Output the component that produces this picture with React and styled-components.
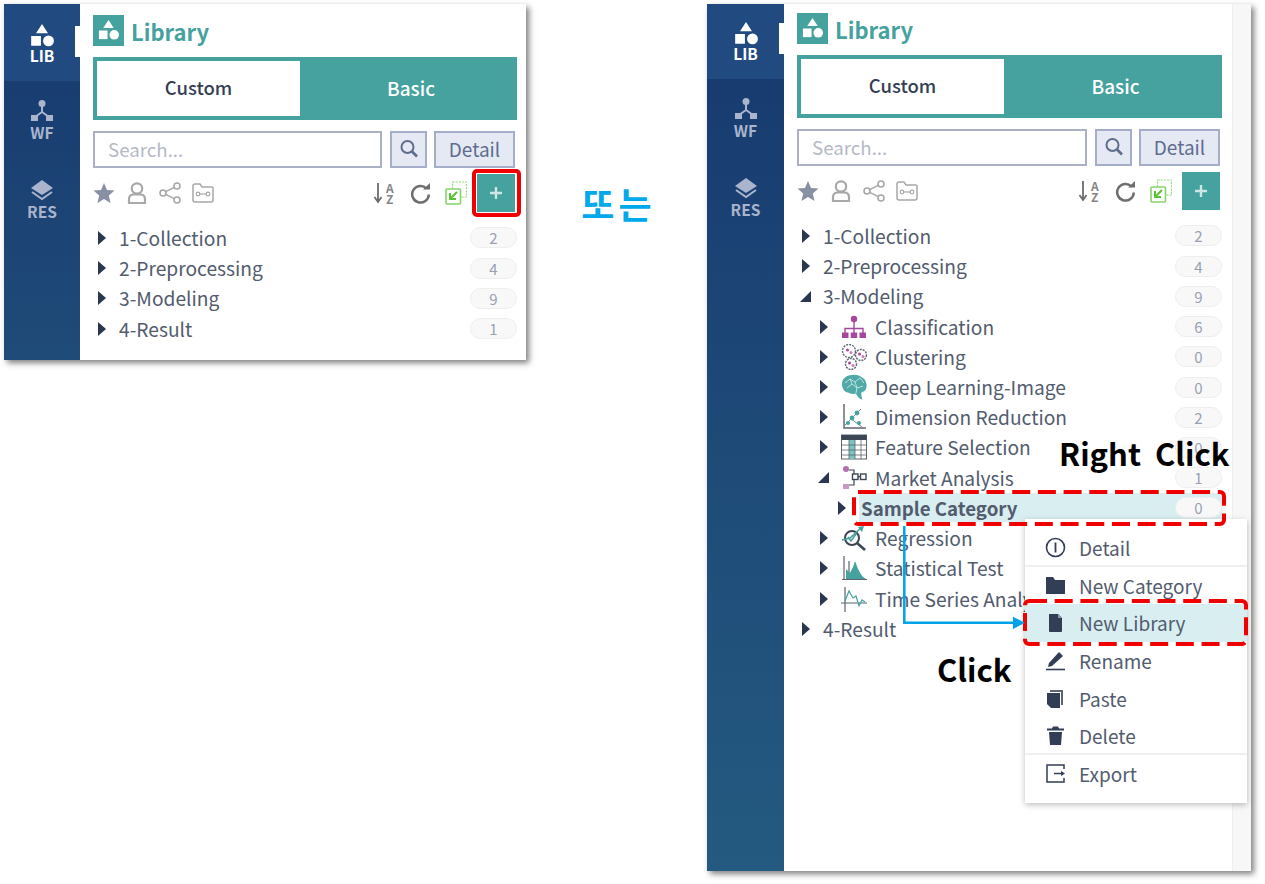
import React from 'react';
import styled, {createGlobalStyle} from 'styled-components';

const FONT = '"Noto Sans CJK KR", "Noto Sans", sans-serif';
const TEAL = '#45a29f';
const INK = '#525c6e';
const NAVY = '#2b3750';

const GlobalStyle = createGlobalStyle`
    * { box-sizing: border-box; }
    html, body { margin: 0; background: #fff; }
    body { font-family: ${FONT}; }
`;

const Page = styled.div`
    width: 1265px;
    height: 884px;
    padding: 4px;
    display: flex;
    align-items: flex-start;
    background: #fff;
    overflow: hidden;
`;

const Window = styled.div`
    position: relative;
    flex: none;
    display: flex;
    width: ${p => p.$width}px;
    height: ${p => p.$height}px;
    background: #fff;
    box-shadow: 3px 3px 6px rgba(0, 0, 0, .5);
`;

const Middle = styled.div`
    flex: none;
    width: 181px;
    padding-top: 177px;
    text-align: center;
    color: #00a8ec;
    font-size: 36px;
    font-weight: 700;
    line-height: 44px;
    word-spacing: -4px;
`;

const Sidebar = styled.div`
    position: relative;
    flex: none;
    width: ${p => p.$width}px;
    background: linear-gradient(#17396f, ${p => p.$end});
`;

const SideTab = styled.div`
    height: ${p => p.$height}px;
    padding-top: ${p => p.$pad}px;
    display: flex;
    flex-direction: column;
    align-items: center;
    font-size: 15.5px;
    line-height: 17px;
    font-weight: 700;
    color: ${p => p.$active ? '#fff' : '#aab4cc'};
    background: ${p => p.$active ? '#214a80' : 'transparent'};
`;

const SideCaption = styled.div`
    margin-top: ${p => p.$gap}px;
`;

const SideMark = styled.div`
    position: absolute;
    right: 0;
    top: ${p => p.$top}px;
    width: 5px;
    height: 31px;
    background: #fff;
`;

const Content = styled.div`
    flex: 1;
    min-width: 0;
    padding: ${p => p.$top}px ${p => p.$right}px 0 13px;
`;

const Scroller = styled.div`
    flex: none;
    width: 19px;
    background: #f7f7f7;
    border-left: 1px solid #eee;
`;

const TitleRow = styled.div`
    display: flex;
    align-items: center;
    gap: 7px;
    height: 31px;
    color: ${TEAL};
    font-size: 22px;
    font-weight: 700;
`;

const TitleIcon = styled.div`
    width: 31px;
    height: 31px;
    background: ${TEAL};
    display: flex;
    align-items: center;
    justify-content: center;
`;

const Tabs = styled.div`
    display: flex;
    height: 63px;
    margin-top: 11px;
    border: 4px solid ${TEAL};
    background: ${TEAL};
`;

const CustomTab = styled.div`
    flex: none;
    width: 203px;
    padding-bottom: 3px;
    display: flex;
    align-items: center;
    justify-content: center;
    font-size: 18.5px;
    font-weight: 500;
    background: #fff;
    color: #333e55;
`;

const BasicTab = styled.div`
    flex: 1;
    padding: 0 0 3px 9px;
    display: flex;
    align-items: center;
    justify-content: center;
    font-size: 19px;
    font-weight: 500;
    color: #fff;
`;

const SearchRow = styled.div`
    display: flex;
    height: 37px;
    margin-top: 11px;
    padding-right: 2px;
`;

const SearchBox = styled.div`
    flex: 1;
    display: flex;
    align-items: center;
    padding: 0 0 2px 13px;
    border: 2px solid #abb1c4;
    color: #b4b9c6;
    font-size: 18.7px;
`;

const SquareButton = styled.div`
    flex: none;
    width: ${p => p.$width}px;
    margin-left: ${p => p.$gap}px;
    padding-bottom: 2px;
    display: flex;
    align-items: center;
    justify-content: center;
    border: 2px solid #a4aec9;
    background: #e5e9f4;
    color: #5e6d8e;
    font-size: 19px;
`;

const Toolbar = styled.div`
    display: flex;
    justify-content: space-between;
    align-items: center;
    height: 38px;
    margin-top: 6px;
    padding-right: 2px;
`;

const ToolGroup = styled.div`
    display: flex;
    align-items: center;
    gap: ${p => p.$gap}px;
`;

const AddButton = styled.div`
    width: 38px;
    height: 38px;
    margin-left: -4px;
    display: flex;
    align-items: center;
    justify-content: center;
    background: ${TEAL};
`;

const SortBox = styled.div`
    width: 22px;
    height: 22px;
    display: flex;
    gap: 3px;
`;

const SortLetters = styled.div`
    display: flex;
    flex-direction: column;
    color: #858585;
    font-size: 12px;
    font-weight: 700;
    line-height: 11px;
`;

const Tree = styled.div`
    margin-top: 10.8px;
`;

const Row = styled.div`
    display: flex;
    align-items: center;
    height: 30.23px;
    padding-left: ${p => 5 + p.$level * 18}px;
    color: ${INK};
    font-size: 19.2px;
`;

const CaretSlot = styled.div`
    flex: none;
    width: 21px;
    display: flex;
    align-items: center;
`;

const CaretRight = styled.div`
    width: 0;
    height: 0;
    border-left: 8px solid ${NAVY};
    border-top: 7.5px solid transparent;
    border-bottom: 7.5px solid transparent;
`;

const CaretDown = styled.div`
    width: 0;
    height: 0;
    margin-left: -2px;
    border-right: 11px solid ${NAVY};
    border-top: 11px solid transparent;
`;

const RowIcon = styled.div`
    flex: none;
    width: 26px;
    height: 26px;
    margin-right: 8px;
`;

const Label = styled.div`
    flex: 1;
    min-width: 0;
    height: 29px;
    padding-left: ${p => p.$selected ? 2 : 0}px;
    display: flex;
    align-items: center;
    justify-content: space-between;
    white-space: nowrap;
    font-size: ${p => p.$selected ? 18.7 : 19.2}px;
    font-weight: ${p => p.$selected ? 700 : 400};
    background: ${p => p.$selected ? '#d8eef1' : 'transparent'};
`;

const Badge = styled.div`
    flex: none;
    width: 47px;
    height: 21px;
    display: flex;
    align-items: center;
    justify-content: center;
    border: 1px solid #eee;
    border-radius: 11px;
    background: #f8f8f8;
    color: #98a1b3;
    font-size: 15px;
    font-weight: 400;
`;

const Menu = styled.div`
    position: absolute;
    left: 318px;
    top: 515px;
    width: 222px;
    height: 284px;
    padding-top: 10px;
    background: #fff;
    box-shadow: 0 2px 6px rgba(0, 0, 0, .25);
`;

const MenuItem = styled.div`
    display: flex;
    align-items: center;
    gap: 13px;
    height: 37.6px;
    padding-left: 20px;
    color: ${INK};
    font-size: 19px;
    background: ${p => p.$active ? '#d8eef1' : 'transparent'};
    box-shadow: ${p => p.$divider ? '0 -2px 0 #f0f0f0' : 'none'};
`;

const RedFrame = styled.div`
    position: absolute;
    left: 468px;
    top: 165px;
    width: 49px;
    height: 48px;
    border: 4px solid #f00000;
    border-radius: 5px;
`;

const Callout = styled.div`
    position: absolute;
    left: ${p => p.$left}px;
    top: ${p => p.$top}px;
    color: #000;
    font-size: 31px;
    font-weight: 700;
    line-height: 40px;
    word-spacing: 7px;
    white-space: nowrap;
`;

const Overlay = styled.svg`
    position: absolute;
    left: 0;
    top: 0;
    pointer-events: none;
`;

const Svg = ({size = 22, h, vb, children}) =>
    <svg width={size} height={h || size} viewBox={vb || `0 0 ${size} ${h || size}`} style={{display: 'block'}}>
        {children}
    </svg>;

const ShapesIcon = ({size, color}) =>
    <Svg size={size} vb="0 0 24 24">
        <path d="M12 1 L17.5 9.5 H6.5 Z" fill={color}/>
        <rect x="2" y="12" width="9" height="9" fill={color}/>
        <circle cx="18" cy="16.5" r="5" fill={color}/>
    </Svg>;

const FlowIcon = () =>
    <Svg size={24} vb="0 0 24 24">
        <circle cx="12" cy="4.5" r="3.5" fill="#aab4cc"/>
        <path d="M12 7 V13 M12 13 L5 18 M12 13 L19 18" stroke="#aab4cc" strokeWidth="2" fill="none"/>
        <rect x="1" y="16" width="7" height="6" fill="#aab4cc"/>
        <rect x="16" y="16" width="7" height="6" fill="#aab4cc"/>
    </Svg>;

const LayersIcon = () =>
    <Svg size={24} vb="0 0 24 24">
        <path d="M12 2 L23 10 L12 17 L1 10 Z" fill="#aab4cc"/>
        <path d="M2 14 L12 21 L22 14" stroke="#aab4cc" strokeWidth="2" fill="none"/>
    </Svg>;

const MagnifierIcon = () =>
    <Svg size={20} vb="0 0 20 20">
        <circle cx="8.5" cy="8" r="6" stroke="#5e6d8e" strokeWidth="2" fill="none"/>
        <path d="M13 12.5 L18 17.5" stroke="#5e6d8e" strokeWidth="2.6"/>
    </Svg>;

const StarIcon = () =>
    <Svg vb="0 0 22 22">
        <path d="M11 1 L14 8 L21.5 8.6 L15.8 13.5 L17.6 21 L11 17 L4.4 21 L6.2 13.5 L.5 8.6 L8 8 Z" fill="#8790a5"/>
    </Svg>;

const UserIcon = () =>
    <Svg vb="0 0 22 22">
        <circle cx="11" cy="6.5" r="5.2" fill="none" stroke="#a8a8a8" strokeWidth="2.2"/>
        <path d="M3 21 V17 C3 14 5 12.5 8 12.5 H14 C17 12.5 19 14 19 17 V21 Z" fill="none" stroke="#a8a8a8" strokeWidth="2.2"/>
    </Svg>;

const ShareIcon = () =>
    <Svg vb="0 0 22 22">
        <circle cx="4" cy="11" r="3" fill="none" stroke="#a8a8a8" strokeWidth="1.6"/>
        <circle cx="18" cy="4" r="3" fill="none" stroke="#a8a8a8" strokeWidth="1.6"/>
        <circle cx="18" cy="18" r="3" fill="none" stroke="#a8a8a8" strokeWidth="1.6"/>
        <path d="M6.7 9.6 L15.3 5.4 M6.7 12.4 L15.3 16.6" stroke="#a8a8a8" strokeWidth="1.6"/>
    </Svg>;

const KeyFolderIcon = () =>
    <Svg vb="0 0 22 22">
        <path d="M1 4 Q1 2 3 2 H8 L10 5 H20 Q21 5 21 6 V18 Q21 20 19 20 H3 Q1 20 1 18 Z" fill="none" stroke="#a8a8a8" strokeWidth="1.5"/>
        <circle cx="6" cy="12" r="1.8" fill="none" stroke="#a8a8a8" strokeWidth="1.2"/>
        <circle cx="16" cy="12" r="1.8" fill="none" stroke="#a8a8a8" strokeWidth="1.2"/>
        <path d="M8 12 H14" stroke="#a8a8a8" strokeWidth="1.2"/>
    </Svg>;

const SortIcon = () =>
    <SortBox>
        <Svg size={10} h={22} vb="0 0 10 22">
            <path d="M5 1 V19 M1.5 15 L5 20 L8.5 15" fill="none" stroke="#6c6c6c" strokeWidth="1.8"/>
        </Svg>
        <SortLetters><span>A</span><span>Z</span></SortLetters>
    </SortBox>;

const RefreshIcon = () =>
    <Svg vb="0 0 22 22">
        <path d="M17.5 6.5 A8.3 8.3 0 1 0 19.8 12.5" fill="none" stroke="#6e6e6e" strokeWidth="2.5"/>
        <path d="M14 7.5 H21 V1 Z" fill="#6e6e6e"/>
    </Svg>;

const ImportIcon = () =>
    <Svg h={24} vb="0 0 22 24">
        <rect x="7.5" y="1" width="14" height="15" fill="none" stroke="#8fdc77" strokeWidth="1.2" strokeDasharray="2 1.2"/>
        <rect x="1" y="8" width="14.5" height="15" rx="1" fill="#fff" stroke="#86d36b" strokeWidth="1.6"/>
        <path d="M12 11 L6 17 M5 12 V18 H11" fill="none" stroke="#5cc236" strokeWidth="2"/>
    </Svg>;

const PlusIcon = () =>
    <Svg size={14} vb="0 0 14 14">
        <path d="M7 1 V13 M1 7 H13" stroke="#cfe6e4" strokeWidth="2.4"/>
    </Svg>;

const PURPLE = '#a5479c';
const GRAY = '#5d6470';

const OrgIcon = () =>
    <Svg size={26} vb="0 0 26 26">
        <circle cx="13" cy="5" r="3.2" fill={PURPLE}/>
        <path d="M13 8 V15 M4 19 V14.5 H22 V19 M13 14.5 V19" fill="none" stroke={PURPLE} strokeWidth="1.4"/>
        <rect x="1" y="18.5" width="6.5" height="5.5" fill={PURPLE}/>
        <rect x="9.7" y="18.5" width="6.5" height="5.5" fill={PURPLE}/>
        <rect x="18.5" y="18.5" width="6.5" height="5.5" fill={PURPLE}/>
    </Svg>;

const ClusterIcon = () =>
    <Svg size={26} vb="0 0 26 26">
        {[[8, 7, 6.5], [20, 11, 5.5], [10, 20, 5.5]].map(([cx, cy, r]) =>
            <g key={cx}>
                <circle {...{cx, cy, r}} fill="#fff" stroke="#5d6470" strokeWidth="1.4" strokeDasharray="2 1"/>
                <circle cx={cx - 1.5} cy={cy - 1} r="1.5" fill={PURPLE}/>
                <circle cx={cx + 2} cy={cy + 1.5} r="1.5" fill="#c77dc0"/>
            </g>)}
    </Svg>;

const BrainIcon = () =>
    <Svg size={26} vb="0 0 26 26">
        <path d="M1 10 C1 5 5 1 11 1 C13 0 19 1 22 4 C25 6 26 10 25.5 13 C25 17 22 18 20.5 18 C20 20 20.5 23 21.5 25.5 C18 25 16 22 15 19.5 C12 20.5 9 19.5 7 18.5 C3 18 1 14 1 10 Z" fill="#4fa9a6"/>
        <path d="M4 9 L9 5 L14 8 L19 4 L23 9 M6 14 L11 10 L16 14 L22 12 M9 5 L11 10 M14 8 L16 14 M16 14 L15 19" fill="none" stroke="#c9e8e6" strokeWidth=".9"/>
    </Svg>;

const ScatterIcon = () =>
    <Svg size={26} vb="0 0 26 26">
        <path d="M3 0 V24 H25" fill="none" stroke={GRAY} strokeWidth="1.4"/>
        <path d="M3 22 L20 5 M9 14 L21 23" stroke="#7a8088" strokeWidth="1"/>
        <circle cx="16" cy="9" r="2.4" fill="#45a29f"/>
        <circle cx="11" cy="14" r="2.4" fill="#45a29f"/>
        <circle cx="7" cy="19" r="2" fill="#45a29f"/>
        <circle cx="18" cy="19" r="2" fill="#45a29f"/>
    </Svg>;

const TableIcon = () =>
    <Svg size={26} vb="0 0 26 26">
        <rect x=".5" y="1" width="25" height="24" fill="#fff" stroke={GRAY} strokeWidth="1"/>
        <rect x=".5" y="1" width="25" height="5" fill="#3d4654"/>
        <rect x="8" y="6" width="6" height="19" fill="#7cc4c0"/>
        <path d="M8 6 V25 M14 6 V25 M20 6 V25 M1 11 H25 M1 16 H25 M1 21 H25" stroke={GRAY} strokeWidth=".8"/>
    </Svg>;

const NodesIcon = () =>
    <Svg size={26} vb="0 0 26 26">
        <circle cx="5" cy="4" r="3" fill="#b56fb0"/>
        <rect x="2" y="19" width="6" height="5" fill="#c79ac4"/>
        <rect x="11.5" y="9" width="5.5" height="5.5" fill="#fff" stroke="#3d4654" strokeWidth="1.4"/>
        <rect x="19.5" y="9" width="5.5" height="5.5" fill="#fff" stroke="#3d4654" strokeWidth="1.4"/>
        <path d="M8 5 H13 V9 M13 14.5 V20 H8 M17 11.7 H19.5" fill="none" stroke="#3d4654" strokeWidth="1.2"/>
    </Svg>;

const RegressionIcon = () =>
    <Svg size={26} vb="0 0 26 26">
        <circle cx="11" cy="13" r="7" fill="none" stroke="#3d4654" strokeWidth="2"/>
        <path d="M16 18 L24 25" stroke="#3d4654" strokeWidth="2.6"/>
        <path d="M1 15 L9 13 L20 3" fill="none" stroke="#45a29f" strokeWidth="1.6"/>
        <path d="M17 2 L23 1 L21 7 Z" fill="#45a29f"/>
        <path d="M7 12 L10 16 L15 9" fill="none" stroke="#45a29f" strokeWidth="1.6"/>
    </Svg>;

const HistogramIcon = () =>
    <Svg size={26} vb="0 0 26 26">
        <path d="M3 1 V25 M8 6 V25 M1 24.5 H26" stroke={GRAY} strokeWidth="1.2"/>
        <path d="M5 24 V14 L9 18 L12 12 L14 6 L17 14 L21 21 L25 24 Z" fill="#45a29f"/>
    </Svg>;

const WaveIcon = () =>
    <Svg size={26} vb="0 0 26 26">
        <path d="M4 1 V26 M0 17 H26" stroke={GRAY} strokeWidth="1.2"/>
        <path d="M4 15 L8 5 L12 12 L15 10 L18 20 L21 14 L24 16" fill="none" stroke="#45a29f" strokeWidth="1.2"/>
    </Svg>;

const DARK = '#323e55';

const InfoIcon = () =>
    <Svg size={21} vb="0 0 21 21">
        <circle cx="10.5" cy="10.5" r="9" fill="none" stroke={DARK} strokeWidth="1.6"/>
        <path d="M10.5 5.5 V15.5" stroke={DARK} strokeWidth="1.8"/>
    </Svg>;

const FolderIcon = () =>
    <Svg size={21} vb="0 0 21 21">
        <path d="M1 2 H8 L10 5 H20 V19 H1 Z" fill={DARK}/>
    </Svg>;

const FileIcon = () =>
    <Svg size={21} vb="0 0 21 21">
        <path d="M4 2 H13 L17 6 V19 Q17 20 16 20 H5 Q4 20 4 19 Z" fill={DARK}/>
        <path d="M13 2 L17 6 H13 Z" fill="#8d96a6"/>
    </Svg>;

const PenIcon = () =>
    <Svg size={21} vb="0 0 21 21">
        <path d="M4 13 L14 2 L18 6 L7 16 L3 17 Z" fill={DARK}/>
        <path d="M1 19.5 H20" stroke={DARK} strokeWidth="1.6"/>
    </Svg>;

const PasteIcon = () =>
    <Svg size={21} vb="0 0 21 21">
        <path d="M5 2 H18 V17 H16 V4 H5 Z" fill="#5b6577"/>
        <path d="M2 5 H15 V20 H6 L2 16 Z" fill={DARK}/>
    </Svg>;

const TrashIcon = () =>
    <Svg size={21} vb="0 0 21 21">
        <path d="M2 3.5 H7 L8 1.5 H13 L14 3.5 H19 V5.5 H2 Z" fill={DARK}/>
        <path d="M4 7 H17 L16 20 H5 Z" fill={DARK}/>
    </Svg>;

const ExportIcon = () =>
    <Svg size={21} vb="0 0 21 21">
        <path d="M19 6 V2 H2 V19 H19 V15" fill="none" stroke={DARK} strokeWidth="1.5"/>
        <path d="M9 10.5 H18" stroke={DARK} strokeWidth="1.5"/>
        <path d="M16 8 L20 10.5 L16 13 Z" fill={DARK}/>
    </Svg>;

const Panel = ({top, right, rows}) =>
    <Content $top={top} $right={right}>
        <TitleRow>
            <TitleIcon><ShapesIcon size={23} color="#fff"/></TitleIcon>
            Library
        </TitleRow>
        <Tabs>
            <CustomTab>Custom</CustomTab>
            <BasicTab>Basic</BasicTab>
        </Tabs>
        <SearchRow>
            <SearchBox>Search...</SearchBox>
            <SquareButton $width={37} $gap={8}><MagnifierIcon/></SquareButton>
            <SquareButton $width={81} $gap={7}>Detail</SquareButton>
        </SearchRow>
        <Toolbar>
            <ToolGroup $gap={11}>
                <StarIcon/><UserIcon/><ShareIcon/><KeyFolderIcon/>
            </ToolGroup>
            <ToolGroup $gap={14}>
                <SortIcon/><RefreshIcon/><ImportIcon/>
                <AddButton><PlusIcon/></AddButton>
            </ToolGroup>
        </Toolbar>
        <Tree>
            {rows.map(({name, count, level = 0, open, Icon, selected}) =>
                <Row key={name} $level={level}>
                    <CaretSlot>{open ? <CaretDown/> : <CaretRight/>}</CaretSlot>
                    {Icon && <RowIcon><Icon/></RowIcon>}
                    <Label $selected={selected}>
                        {name}
                        {count !== undefined && <Badge>{count}</Badge>}
                    </Label>
                </Row>)}
        </Tree>
    </Content>;

const Nav = ({lead, markTop}) =>
    <>
        <SideTab $active $height={lead} $pad={lead - 58}>
            <ShapesIcon size={26} color="#fff"/>
            <SideCaption $gap={-2}>LIB</SideCaption>
        </SideTab>
        <SideMark $top={markTop}/>
        <SideTab $height={79} $pad={18}>
            <FlowIcon/>
            <SideCaption $gap={1}>WF</SideCaption>
        </SideTab>
        <SideTab $height={79} $pad={18}>
            <LayersIcon/>
            <SideCaption $gap={1}>RES</SideCaption>
        </SideTab>
    </>;

const closedRows = [
    {name: '1-Collection', count: 2},
    {name: '2-Preprocessing', count: 4},
    {name: '3-Modeling', count: 9},
    {name: '4-Result', count: 1}
];

// the context menu covers the counts of the last three modeling rows
const openRows = [
    {name: '1-Collection', count: 2},
    {name: '2-Preprocessing', count: 4},
    {name: '3-Modeling', count: 9, open: true},
    {name: 'Classification', count: 6, level: 1, Icon: OrgIcon},
    {name: 'Clustering', count: 0, level: 1, Icon: ClusterIcon},
    {name: 'Deep Learning-Image', count: 0, level: 1, Icon: BrainIcon},
    {name: 'Dimension Reduction', count: 2, level: 1, Icon: ScatterIcon},
    {name: 'Feature Selection', count: 0, level: 1, Icon: TableIcon},
    {name: 'Market Analysis', count: 1, level: 1, open: true, Icon: NodesIcon},
    {name: 'Sample Category', count: 0, level: 2, selected: true},
    {name: 'Regression', level: 1, Icon: RegressionIcon},
    {name: 'Statistical Test', level: 1, Icon: HistogramIcon},
    {name: 'Time Series Analysis', level: 1, Icon: WaveIcon},
    {name: '4-Result'}
];

const menuItems = [
    {name: 'Detail', Icon: InfoIcon},
    {name: 'New Category', Icon: FolderIcon, divider: true},
    {name: 'New Library', Icon: FileIcon, active: true},
    {name: 'Rename', Icon: PenIcon},
    {name: 'Paste', Icon: PasteIcon},
    {name: 'Delete', Icon: TrashIcon},
    {name: 'Export', Icon: ExportIcon, divider: true}
];

export default function App() {
    return <>
        <GlobalStyle/>
        <Page>
            <Window $width={522} $height={356}>
                <Sidebar $width={76} $end="#1f4b78"><Nav lead={77} markTop={22}/></Sidebar>
                <Panel top={11} right={9} rows={closedRows}/>
                <RedFrame/>
            </Window>
            <Middle>또 는</Middle>
            <Window $width={544} $height={867}>
                <Sidebar $width={77} $end="#245a80"><Nav lead={75} markTop={19}/></Sidebar>
                <Panel top={9} right={10} rows={openRows}/>
                <Scroller/>
                <Menu>
                    {menuItems.map(({name, Icon, divider, active}) =>
                        <MenuItem key={name} $divider={divider} $active={active}>
                            <Icon/>{name}
                        </MenuItem>)}
                </Menu>
                <Callout $left={352} $top={429}>Right Click</Callout>
                <Callout $left={230} $top={645}>Click</Callout>
                <Overlay width="544" height="867">
                    <rect x="147" y="488" width="370" height="32" rx="4" fill="none" stroke="#f00000" strokeWidth="4" strokeDasharray="18 7.7"/>
                    <rect x="318" y="597" width="221" height="43" rx="4" fill="none" stroke="#f00000" strokeWidth="4" strokeDasharray="18 7.7"/>
                    <path d="M197.3 522 V618.7 H307" fill="none" stroke="#00a2e8" strokeWidth="2.5"/>
                    <path d="M306 612.7 L318 618.7 L306 625 Z" fill="#00a2e8"/>
                </Overlay>
            </Window>
        </Page>
    </>;
}
